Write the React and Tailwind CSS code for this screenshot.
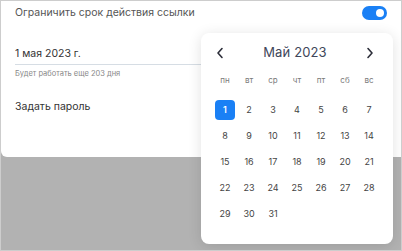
import React from "react";

const weekDays = ["пн", "вт", "ср", "чт", "пт", "сб", "вс"];

const Calendar = () => {
  const days = Array.from({ length: 31 }, (_, i) => i + 1);

  return (
    <div className="absolute left-[200px] top-[32px] w-[192px] h-[211px] bg-white rounded-[8px] shadow-[0_2px_14px_rgba(0,0,0,0.12)] px-[12px] pt-[12px]">
      {/* Header */}
      <div className="h-[16px] flex items-center justify-between">
        <svg width="10" height="12" viewBox="0 0 10 12" className="ml-[2px]">
          <path d="M7 1.5 L3 6 L7 10.5" fill="none" stroke="#2d2f3a" strokeWidth="1.6" strokeLinecap="round" strokeLinejoin="round" />
        </svg>
        <span className="text-[13px] text-[#40465a] tracking-[0.01em]">Май 2023</span>
        <svg width="10" height="12" viewBox="0 0 10 12" className="mr-[6px]">
          <path d="M3 1.5 L7 6 L3 10.5" fill="none" stroke="#2d2f3a" strokeWidth="1.6" strokeLinecap="round" strokeLinejoin="round" />
        </svg>
      </div>

      {/* Week days */}
      <div className="grid grid-cols-7 mt-[12px] h-[14px] items-center">
        {weekDays.map((d) => (
          <span key={d} className="text-center text-[8px] text-[#7a7a7a]">
            {d}
          </span>
        ))}
      </div>

      {/* Days */}
      <div className="grid grid-cols-7 mt-[10px]">
        {days.map((d) => (
          <div key={d} className="h-[26px] flex items-center justify-center">
            {d === 1 ? (
              <span className="w-[20px] h-[20px] rounded-[4px] bg-[#1a80f5] text-white text-[9px] font-semibold flex items-center justify-center">
                {d}
              </span>
            ) : (
              <span className="text-[9px] text-[#444]">{d}</span>
            )}
          </div>
        ))}
      </div>
    </div>
  );
};

export default function App() {
  return (
    <div className="relative w-[402px] h-[251px] border border-[#cdcdcd] bg-[#b2b2b2] overflow-hidden font-['Inter','Noto_Sans',sans-serif]">
      {/* Settings panel */}
      <div className="bg-white h-[156px] rounded-bl-[6px] px-[14px] flex flex-col">
        <div className="flex items-center justify-between h-[24px]">
          <span className="text-[10.5px] text-[#555]">Ограничить срок действия ссылки</span>
          <div className="w-[25px] h-[14px] rounded-full bg-[#1a80f5] flex items-center justify-end pr-[3px]">
            <span className="w-[8px] h-[8px] rounded-full bg-white" />
          </div>
        </div>

        <div className="mt-[21px] h-[16px] flex items-center">
          <span className="text-[10.5px] text-[#333]">1 мая 2023 г.</span>
        </div>
        <div className="mt-[2px] h-px bg-[#d6dde4]" />
        <div className="mt-[3px] h-[12px] flex items-center">
          <span className="text-[7.5px] text-[#888]">Будет работать еще 203 дня</span>
        </div>

        <div className="mt-[19px] h-[16px] flex items-center">
          <span className="text-[10.5px] text-[#333]">Задать пароль</span>
        </div>
      </div>

      <Calendar />
    </div>
  );
}
